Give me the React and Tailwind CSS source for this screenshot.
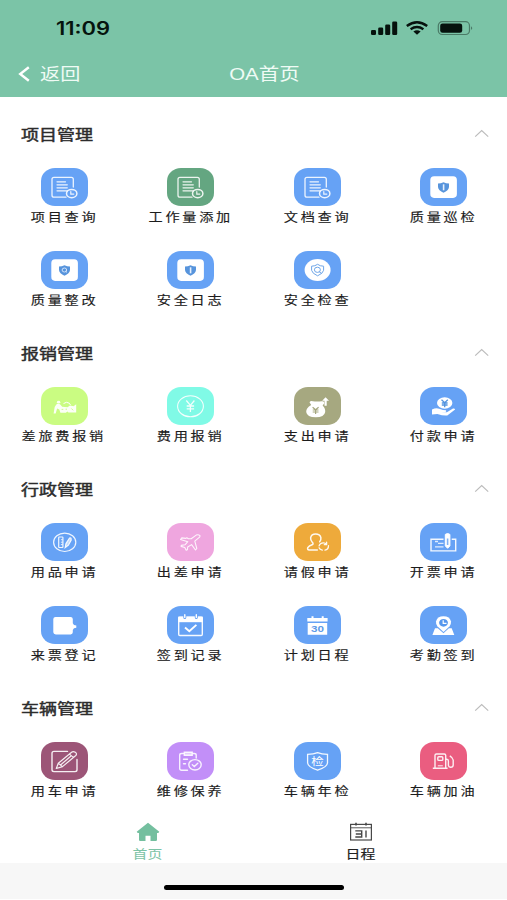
import React from 'react';

const BLUE = 'bg-[#66a2f5]';

function DocClock() {
  return (
    <g fill="none" stroke="#fff" strokeOpacity=".88" strokeWidth="1.3" strokeLinecap="round">
      <path d="M25 29.2H13Q11 29.2 11 27.2V11.3Q11 9.3 13 9.3H30.3Q32.3 9.3 32.3 11.3V19" />
      <path d="M16 13.8H24.5M16 16.8H26.3M16 19.8H26.3M16 22.8H26.3" strokeWidth="1.2" />
      <ellipse cx="30.7" cy="25.6" rx="5.2" ry="4.1" strokeWidth="1.5" />
      <path d="M29.8 23.6V26.1H32.8" strokeWidth="1.2" />
    </g>
  );
}

function ShieldBox({ mark }) {
  return (
    <g>
      <rect x="10.3" y="8.3" width="26.6" height="21.6" rx="3.8" fill="#fff" />
      <path d="M23.5 14.2Q26 15.6 29 15.6V19Q28.6 22.6 23.5 24.8Q18.4 22.6 18 19V15.6Q21 15.6 23.5 14.2Z" fill="#5794dc" />
      {mark === 'bang' ? (
        <path d="M23.6 16.3V22.3" stroke="#e6f0fd" strokeWidth="1.6" />
      ) : (
        <g fill="none" stroke="#cfe2fb" strokeWidth="1">
          <ellipse cx="23.4" cy="19" rx="2.3" ry="2" />
          <path d="M24.5 20.2L26 21.4" />
        </g>
      )}
    </g>
  );
}

function ShieldRound() {
  return (
    <g fill="none" stroke="#6fa6e8" strokeWidth="1">
      <ellipse cx="23.6" cy="19" rx="13" ry="11" fill="#fff" stroke="none" />
      <path d="M23.6 13.3Q26 15.2 29.6 15.2V19.3Q29 22.5 23.6 24.8Q18.2 22.5 17.6 19.3V15.2Q21 15.2 23.6 13.3Z" />
      <ellipse cx="23.4" cy="18.8" rx="3" ry="2.6" />
      <path d="M25.2 20.8L27.5 22.3" />
    </g>
  );
}

function Travel() {
  return (
    <g fill="#fff" fillOpacity=".92">
      <ellipse cx="17.6" cy="15.2" rx="1.7" ry="1.4" />
      <path d="M15.3 17.4Q17 16.2 19 17.3L21.2 19.8L26.5 20.3L29 18.6L32.5 19.2L35.2 17.3V25.6H27.5L26.4 24.6L24.8 25.8H19.4L18.3 22.5L16.1 21.6L14.7 26.4H12.6L13.7 20Z" />
      <path d="M22.5 16.6Q25.5 14.2 28.3 16.2L29.5 18" fill="none" stroke="#fff" strokeWidth="1" />
      <path d="M20.6 22.4H22.3M24.6 22.2H26M30.4 21.5L32.2 23.3" stroke="#cbf782" strokeWidth=".9" />
    </g>
  );
}

function YenCircle() {
  return (
    <g fill="none" stroke="#fff" strokeOpacity=".9" strokeWidth="1.1">
      <ellipse cx="23.5" cy="19.3" rx="12.9" ry="10.5" />
      <path d="M19.3 13.5L23.4 18.3L27.4 13.5M23.4 18.3V25M19.7 19H27.1M19.7 21.8H27.1" strokeWidth="1.3" />
    </g>
  );
}

function MoneyBag() {
  return (
    <g>
      <path d="M15.5 15.2Q16.5 13.6 18.8 14.2Q23 15 27.8 14.2Q30.5 13.9 30.3 16.2L28.6 18.4Q31.5 21 31.2 25Q30.3 30.3 21.8 30.3Q13 30.3 12.2 25Q12 20.8 17.2 18Z" fill="#fff" />
      <path d="M18.6 20.3L21.6 22.8L24.6 20.3M21.6 22.8V27M18.7 23H24.5M18.7 25H24.5" stroke="#a5a77f" strokeWidth="1.2" fill="none" />
      <path d="M31.6 10.3L35 13.8H32.7V18.8H30.5V13.8H28.2Z" fill="#fff" />
    </g>
  );
}

function HandCoin() {
  return (
    <g>
      <ellipse cx="24.7" cy="16" rx="7.7" ry="5.7" fill="#fff" />
      <path d="M21.5 12.7L24.7 15.7L27.8 12.7M24.7 15.7V20.2M21.8 16H27.6M21.8 18H27.6" stroke="#5394df" strokeWidth="1.3" fill="none" />
      <path d="M12 22.6Q16 20.3 19.2 21.7L23 23.1L26 23.3Q26.8 24.3 25.5 25.1H21.2L26.9 25.2L33 21.5Q34.8 21.1 35.1 22.5L27.3 28.4Q24 29.1 17.3 26.9L12 27.5Z" fill="#fff" />
    </g>
  );
}

function Supplies() {
  return (
    <g fill="none" stroke="#fff" strokeOpacity=".9" strokeWidth="1.2">
      <ellipse cx="23.7" cy="19.3" rx="11.1" ry="9.2" />
      <rect x="17.7" y="14" width="4.2" height="10.5" rx=".5" />
      <path d="M19.9 16.7H21.7M19.9 19.2H21.7M19.9 21.6H21.7" strokeWidth=".9" />
      <path d="M24.2 24.5L25 20.6L28.6 15Q30.5 14 30.1 17.2L27.4 22.2Z" fill="#fff" fillOpacity=".6" />
    </g>
  );
}

function Plane() {
  return (
    <path
      d="M32 12Q33.7 12.4 32.6 14.2L27.8 18.2L29.8 25.5L28.5 27L24.6 21.6L20.7 24L20.4 26.8L19.2 27.2L17.8 24.5L14.1 23.4L14.3 22.4L18 21.8L20.8 18.7L13.5 16.5L14.8 14.9L18.9 15.4L19.8 14.8L21.4 15.7L24.2 15.8L29.2 12.1Q30.5 11.4 32 12Z"
      fill="none"
      stroke="#fff"
      strokeOpacity=".88"
      strokeWidth="1.1"
      strokeLinejoin="round"
    />
  );
}

function PersonCycle() {
  return (
    <g fill="none" stroke="#fff" strokeOpacity=".93" strokeWidth="1.5" strokeLinecap="round" strokeLinejoin="round">
      <path d="M23.3 27H15.2Q13 26.7 13.8 24.6Q15 22.6 18.6 21.5Q19.6 20.6 18.3 19.3Q16.4 17.3 16.6 14.8Q17.4 11 21.6 11Q26 11 26.9 14.6Q27.2 17 25.7 18.8" />
      <path d="M25.1 22.9Q25.9 19.8 29.4 19.8Q31.4 19.8 32.4 21.3M34.5 22.6Q34.5 26.8 31 27.1M28.3 27.1Q25.7 26.6 25.1 24.8M32.6 19.2V21.7H30.3" strokeWidth="1.3" />
    </g>
  );
}

function Invoice() {
  return (
    <g fill="none" stroke="#fff" strokeWidth="1.4">
      <path d="M23.5 16.2H11V27.9H35.7V16.2H31.7" strokeOpacity=".92" />
      <path d="M15 18.5H18M18 20.4H23.5M15 23.9H23.5" strokeOpacity=".8" />
      <path d="M25.3 11.4Q27.6 9.7 29.9 11.4V22.9L27.6 25.3L25.3 22.9Z" fill="#fff" strokeWidth="1" />
      <path d="M27.6 15.5V22" stroke="#7fb1f5" strokeWidth="1.6" />
    </g>
  );
}

function Ticket() {
  return (
    <path
      d="M14.5 11H29.7Q31.6 11 31.8 13V17.3L33 19L35.3 19.4V21.7L33 22.3L31.8 24V26.3Q31.7 28.4 29.7 28.4H14.8Q12.4 28.4 12.3 26.3V13Q12.4 11 14.5 11Z"
      fill="#fff"
    />
  );
}

function CalendarCheck() {
  return (
    <g>
      <rect x="11.7" y="11.1" width="23.6" height="18.4" rx="1.2" fill="none" stroke="#fff" strokeOpacity=".95" strokeWidth="1.4" />
      <path d="M11.2 10.6H35.8V16.2H11.2Z" fill="#fff" />
      <path d="M17.8 8.8V11.6M29.3 8.8V11.6" stroke="#66a2f5" strokeWidth="3" strokeLinecap="round" />
      <path d="M17.8 8.8V11.4M29.3 8.8V11.4" stroke="#fff" strokeWidth="1.4" strokeLinecap="round" />
      <path d="M18 21.5L22.3 25.3L29.4 18.9" fill="none" stroke="#fff" strokeWidth="1.9" />
    </g>
  );
}

function Calendar30() {
  return (
    <g>
      <path d="M13.3 12H33.6V15.5H13.3ZM13.7 17H33.2V28.8H13.7Z" fill="#fff" />
      <path d="M18.5 10.3V13M28.7 10.3V13" stroke="#fff" strokeWidth="2" />
      <text x="23.6" y="26.1" textAnchor="middle" textLength="13" lengthAdjust="spacingAndGlyphs" className="fill-[#5d9ae8] font-['Liberation_Sans',sans-serif] text-[8.5px] font-bold">30</text>
    </g>
  );
}

function PinClock() {
  return (
    <g>
      <path d="M17.8 22.2L15 22.2L12.4 29H34.3L31.7 22.2H28.9L23.5 27.2Z" fill="#fff" />
      <path d="M23.5 26L17.4 20.2Q15.7 17.8 16 15.6Q17.2 10.2 23.5 10.2Q29.8 10.2 31 15.6Q31.3 17.8 29.6 20.2Z" fill="#fff" />
      <ellipse cx="23.5" cy="16.8" rx="4.4" ry="3.9" fill="#5798ee" />
      <path d="M23.2 14.3V17.3H26.5" fill="none" stroke="#fff" strokeWidth="1.2" />
    </g>
  );
}

function EditSquare() {
  return (
    <g fill="none" stroke="#fff" strokeOpacity=".9" strokeWidth="1.4" strokeLinejoin="round" strokeLinecap="round">
      <path d="M26.5 9.4H13Q11 9.4 11 11.2V27.8Q11 29.6 13 29.6H34Q36 29.6 36 27.8V17.5" />
      <path d="M15.3 26.5L17.3 21.3L30.6 10.2Q32.2 9 34.3 10.3Q36.4 11.7 34.8 13.5L21.5 24.6ZM17.3 21.3L21.5 24.6M28.4 12.1L32.5 15.4M19.5 23L30 14" strokeWidth="1.2" />
    </g>
  );
}

function ClipboardCheck() {
  return (
    <g fill="none" stroke="#fff" strokeOpacity=".88" strokeWidth="1.4" strokeLinecap="round">
      <path d="M16.5 11.5H14.7Q12.7 11.5 12.7 13.2V26.5Q12.7 28.2 14.7 28.2H20.5M26 11.5H27.2Q29.2 11.5 29.2 13.2V16" />
      <path d="M17.3 10.3H25.2V13.3H17.3Z" fill="#fff" fillOpacity=".55" />
      <path d="M16.5 17.2H20.5M16.5 21.7H18.5" />
      <ellipse cx="28" cy="22.8" rx="6.2" ry="5.2" />
      <path d="M25.3 22.8L27.3 24.5L30.8 21.2" />
    </g>
  );
}

function InspectShield() {
  return (
    <g>
      <path d="M23.6 10.7Q27.5 12.4 33.5 12.4V21Q33.2 25 23.6 28.2Q14 25 13.6 21V12.4Q19.7 12.4 23.6 10.7Z" fill="none" stroke="#fff" strokeOpacity=".92" strokeWidth="1.3" />
      <text x="23.6" y="23.2" textAnchor="middle" textLength="12.5" lengthAdjust="spacingAndGlyphs" className="fill-white font-['Noto_Sans_CJK_SC',sans-serif] text-[10.5px]">检</text>
    </g>
  );
}

function FuelPump() {
  return (
    <g fill="none" stroke="#fff" strokeOpacity=".9" strokeWidth="1.4" strokeLinejoin="round">
      <path d="M15 26V13.3Q15 12 16.4 12H24.2Q25.7 12 25.7 13.3V26M12.8 26.2H27.6" />
      <rect x="17.8" y="14.7" width="5" height="3.7" rx="1" />
      <path d="M17.8 23.8H22.8" strokeWidth="1" />
      <path d="M25.7 17.2H26.8Q28.4 17.4 28.4 19V23.4Q28.7 25.3 30.6 25.2Q33.2 25.1 33.2 22.9V18Q32.8 15.7 29.8 13.8" />
    </g>
  );
}

const SECTIONS = [
  {
    title: '项目管理',
    items: [
      { label: '项目查询', color: BLUE, icon: <DocClock /> },
      { label: '工作量添加', color: 'bg-[#64a681]', icon: <DocClock /> },
      { label: '文档查询', color: BLUE, icon: <DocClock /> },
      { label: '质量巡检', color: BLUE, icon: <ShieldBox mark="bang" /> },
      { label: '质量整改', color: BLUE, icon: <ShieldBox mark="lens" /> },
      { label: '安全日志', color: BLUE, icon: <ShieldBox mark="bang" /> },
      { label: '安全检查', color: BLUE, icon: <ShieldRound /> },
    ],
  },
  {
    title: '报销管理',
    items: [
      { label: '差旅费报销', color: 'bg-[#cafc82]', icon: <Travel /> },
      { label: '费用报销', color: 'bg-[#80fae6]', icon: <YenCircle /> },
      { label: '支出申请', color: 'bg-[#a6a880]', icon: <MoneyBag /> },
      { label: '付款申请', color: BLUE, icon: <HandCoin /> },
    ],
  },
  {
    title: '行政管理',
    items: [
      { label: '用品申请', color: BLUE, icon: <Supplies /> },
      { label: '出差申请', color: 'bg-[#efa6df]', icon: <Plane /> },
      { label: '请假申请', color: 'bg-[#eeaa3b]', icon: <PersonCycle /> },
      { label: '开票申请', color: BLUE, icon: <Invoice /> },
      { label: '来票登记', color: BLUE, icon: <Ticket /> },
      { label: '签到记录', color: BLUE, icon: <CalendarCheck /> },
      { label: '计划日程', color: BLUE, icon: <Calendar30 /> },
      { label: '考勤签到', color: BLUE, icon: <PinClock /> },
    ],
  },
  {
    title: '车辆管理',
    items: [
      { label: '用车申请', color: 'bg-[#9c5577]', icon: <EditSquare /> },
      { label: '维修保养', color: 'bg-[#c28ff8]', icon: <ClipboardCheck /> },
      { label: '车辆年检', color: BLUE, icon: <InspectShield /> },
      { label: '车辆加油', color: 'bg-[#ea5d80]', icon: <FuelPump /> },
    ],
  },
];

function StatusBar() {
  return (
    <div className="flex h-[56px] items-center justify-between pl-[56px] pr-[33px]">
      <span className="origin-left scale-x-[1.22] pt-[2px] font-['Inter',sans-serif] text-[18px] font-semibold leading-none text-[#06140e]">11:09</span>
      <svg width="103" height="18" viewBox="0 0 103 18" className="shrink-0">
        <g fill="#06120d">
          <rect x="0" y="11" width="5" height="5" rx="1.3" />
          <rect x="7.2" y="8.5" width="5" height="7.5" rx="1.3" />
          <rect x="14.2" y="5.5" width="5" height="10.5" rx="1.3" />
          <rect x="21.2" y="2.5" width="5" height="13.5" rx="1.3" />
        </g>
        <g fill="none" stroke="#06120d" strokeWidth="2.4">
          <path d="M35.8 7Q46 -0.6 56.2 7" />
          <path d="M39.6 10.2Q46 5.7 52.4 10.2" />
        </g>
        <path d="M42.4 12.5Q46 10 49.6 12.5L46 15.8Z" fill="#06120d" />
        <rect x="67.3" y="2.7" width="31.2" height="12.8" rx="4" fill="none" stroke="#06120d" strokeOpacity=".42" strokeWidth="1.2" />
        <rect x="69.2" y="4.5" width="22" height="9.3" rx="2.3" fill="#06120d" />
        <path d="M100.2 7.2Q102.2 9.1 100.2 11Z" fill="#06120d" fillOpacity=".5" />
      </svg>
    </div>
  );
}

function NavBar() {
  return (
    <div className="grid h-[36px] grid-cols-[1fr_auto_1fr] items-center pl-[21px] text-[16.5px] leading-none text-[#effbf5]">
      <div className="-ml-[3px] flex items-center gap-[10px]">
        <svg width="12" height="16" viewBox="0 0 12 16">
          <path d="M10.8 1.2L2.2 8L10.8 14.8" fill="none" stroke="#fff" strokeWidth="2.4" />
        </svg>
        <span className="origin-left scale-x-[1.22] pb-px">返回</span>
      </div>
      <h1 className="scale-x-[1.24] font-['Liberation_Sans','Noto_Sans_CJK_SC',sans-serif] font-normal">OA首页</h1>
      <span />
    </div>
  );
}

function Section({ title, items }) {
  return (
    <section>
      <div className="flex h-[53px] items-center justify-between pl-[21px] pr-[18px]">
        <h2 className="origin-left scale-x-[1.2] pb-px text-[15px] font-normal leading-none text-[#2c2c2c] [-webkit-text-stroke:0.45px_#2c2c2c]">{title}</h2>
        <svg width="15" height="9" viewBox="0 0 15 9">
          <path d="M1.2 7.6L7.7 1.6L14.2 7.6" fill="none" stroke="#bcbcbc" strokeWidth="1.2" />
        </svg>
      </div>
      <ul className="grid grid-cols-4 pl-px">
        {items.map((item) => (
          <li key={item.label} className="flex h-[83px] flex-col items-center pt-2">
            <div className={`h-[38px] w-[47px] rounded-[14px/13px] ${item.color}`}>
              <svg width="47" height="38" viewBox="0 0 47 38">{item.icon}</svg>
            </div>
            <span className="mt-1 scale-x-[1.18] whitespace-nowrap text-[12px] leading-[14px] tracking-[2.3px] text-[#1c1c1c] [-webkit-text-stroke:0.15px_#1c1c1c]">{item.label}</span>
          </li>
        ))}
      </ul>
    </section>
  );
}

function TabBar() {
  return (
    <nav className="flex h-[46px] justify-center pl-px pt-[5px] text-[12.5px] leading-none">
      <div className="flex w-[213px] flex-col items-center gap-[6px] text-[#7cc3a6]">
        <svg width="24" height="20" viewBox="0 0 24 20">
          <path d="M12 .8L23.3 9.8L22.3 11H21V18Q21 19 19.8 19H14.5V13.7H9.5V19H4.2Q3 19 3 18V11H1.7L.7 9.8Z" fill="#74bf9f" />
        </svg>
        <span className="scale-x-[1.19]">首页</span>
      </div>
      <div className="flex w-[213px] flex-col items-center gap-[6px] text-[#222]">
        <svg width="24" height="20" viewBox="0 0 24 20">
          <g fill="none" stroke="#484848">
            <rect x="1.6" y="2.4" width="20.8" height="15.6" strokeWidth="1.2" />
            <path d="M2 5.8H22" strokeWidth=".9" />
            <path d="M7 .8V3.6M17 .8V3.6" strokeWidth="1.6" />
            <path d="M6.3 8.9H12.7V15H6.3M6.8 12H12.7M17 8.5V15.4" strokeWidth="1.4" />
          </g>
        </svg>
        <span className="scale-x-[1.19] [-webkit-text-stroke:0.15px_#222]">日程</span>
      </div>
    </nav>
  );
}

export default function App() {
  return (
    <div className="flex h-[900px] w-[507px] flex-col overflow-hidden bg-white font-['Noto_Sans_CJK_SC',sans-serif]">
      <header className="h-[97px] shrink-0 bg-[#7bc4a7]">
        <StatusBar />
        <NavBar />
      </header>
      <main className="h-[720px] shrink-0 overflow-hidden pt-[10px]">
        {SECTIONS.map((section) => (
          <Section key={section.title} {...section} />
        ))}
      </main>
      <TabBar />
      <div className="flex h-[36px] justify-center bg-[#f7f7f7] pt-[22px]">
        <div className="h-[5px] w-[180px] rounded-full bg-black" />
      </div>
    </div>
  );
}
